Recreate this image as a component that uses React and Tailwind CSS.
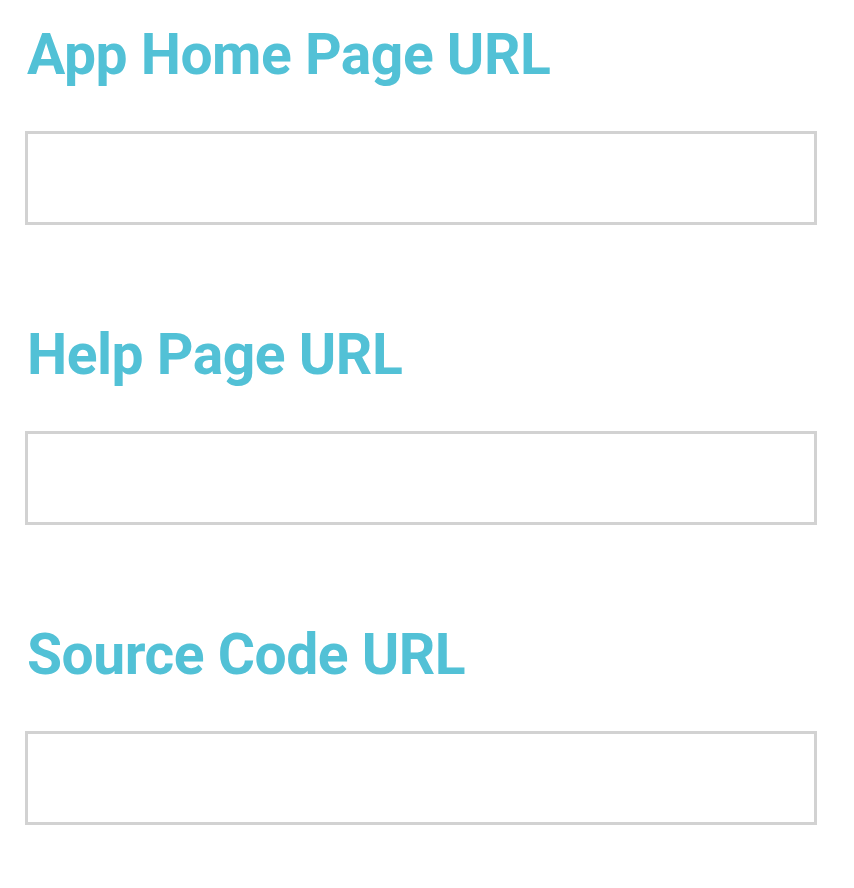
import React from 'react'

function UrlField({ label }) {
  return (
    <div className="flex flex-col">
      <label className="ml-[2px] text-[57px] leading-[70px] font-bold text-[#52c1d6] tracking-[-0.5px]" style={{ fontFamily: 'Roboto, "Liberation Sans", sans-serif' }}>
        {label}
      </label>
      <input
        type="text"
        className="mt-[41px] h-[94px] w-[792px] border-[3px] border-[#d2d2d2] bg-white outline-none"
      />
    </div>
  )
}

export default function App() {
  return (
    <div className="min-h-[888px] w-[854px] bg-white pl-[25px] pt-[20px] flex flex-col gap-[95px]">
      <UrlField label="App Home Page URL" />
      <UrlField label="Help Page URL" />
      <UrlField label="Source Code URL" />
    </div>
  )
}
